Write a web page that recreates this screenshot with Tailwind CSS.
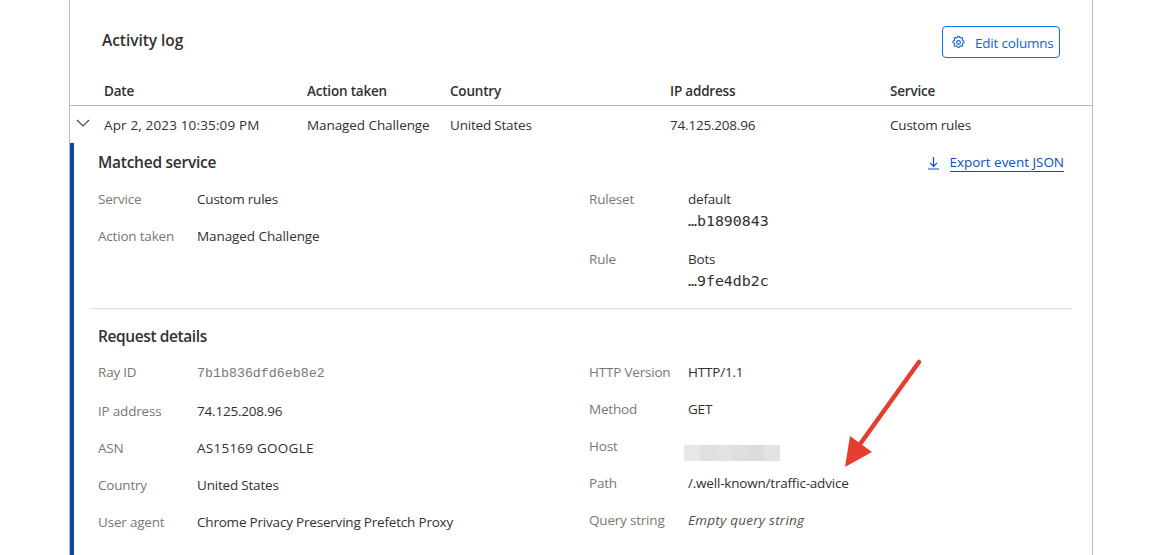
<!DOCTYPE html>
<html lang="en">
<head>
    <meta charset="UTF-8">
    <meta name="viewport" content="width=device-width, initial-scale=1.0">
    <script src="https://cdn.jsdelivr.net/npm/@tailwindcss/browser@4"></script>
    <title>Activity log</title>
</head>
<body class="bg-white h-[555px] overflow-hidden font-['Open_Sans','Noto_Sans',sans-serif] text-[13.5px] tracking-[-0.2px] text-[#313131]">
    <div class="relative ml-[69px] w-[1024px] h-[555px] border-x border-[#b9b9b9] overflow-hidden">
        <!-- card header -->
        <div class="flex justify-between items-start h-[71px] pl-[32px] pr-[32px] pt-[26px]">
            <h2 class="text-[15.5px] leading-[28px] font-semibold tracking-[-0.05px]">Activity log</h2>
            <button class="flex items-center gap-[9px] w-[118px] h-[32px] pl-[8px] border border-[#0e6fe6] rounded-[4px] text-[#0e63d8]">
                <svg class="w-[15px] h-[15px]" viewBox="0 0 24 24" fill="none" stroke="currentColor" stroke-width="1.8">
                    <path stroke-linecap="round" stroke-linejoin="round" d="M10.3 3.3c.4-1.7 3-1.7 3.4 0a1.7 1.7 0 0 0 2.6 1.1c1.5-.9 3.2.8 2.3 2.3a1.7 1.7 0 0 0 1.1 2.6c1.7.4 1.7 3 0 3.4a1.7 1.7 0 0 0-1.1 2.6c.9 1.5-.8 3.2-2.3 2.3a1.7 1.7 0 0 0-2.6 1.1c-.4 1.7-3 1.7-3.4 0a1.7 1.7 0 0 0-2.6-1.1c-1.5.9-3.2-.8-2.3-2.3a1.7 1.7 0 0 0-1.1-2.6c-1.7-.4-1.7-3 0-3.4a1.7 1.7 0 0 0 1.1-2.6c-.9-1.5.8-3.2 2.3-2.3a1.7 1.7 0 0 0 2.6-1.1z"></path>
                    <circle cx="12" cy="12" r="3"></circle>
                </svg>
                <span class="mt-[2px]">Edit columns</span>
            </button>
        </div>

        <!-- table head -->
        <div class="grid grid-cols-[203px_143px_220px_220px_1fr] pl-[34px] h-[35px] items-center font-semibold border-b border-[#b9b9b9] pt-[7px]">
            <div>Date</div>
            <div>Action taken</div>
            <div>Country</div>
            <div>IP address</div>
            <div>Service</div>
        </div>

        <!-- row -->
        <div class="relative grid grid-cols-[203px_143px_220px_220px_1fr] pl-[34px] h-[37px] pt-[1px] items-center">
            <svg class="absolute left-[6px] top-[12px] w-[14px] h-[10px]" viewBox="0 0 14 10" fill="none" stroke="#444" stroke-width="1.1">
                <path d="M1 2l6 6 6-6"></path>
            </svg>
            <div class="tracking-[0.15px]">Apr 2, 2023 10:35:09 PM</div>
            <div class="tracking-[-0.08px]">Managed Challenge</div>
            <div>United States</div>
            <div>74.125.208.96</div>
            <div>Custom rules</div>
        </div>

        <!-- expanded panel -->
        <div class="border-l-[4px] border-[#0a47a6] pl-[16px] pr-[20px] pb-[20px]">
            <div class="flex justify-between items-center h-[39px] pl-[8px] pr-[8px]">
                <h3 class="text-[15.5px] font-semibold tracking-[-0.25px]">Matched service</h3>
                <a href="#" class="flex items-center gap-[9px] text-[#0a4fc0]">
                    <svg class="w-[13px] h-[14px] -translate-x-[1px]" viewBox="0 0 13 14" fill="none" stroke="currentColor" stroke-width="1.2">
                        <path d="M6.5 1v9M3 6.8l3.5 3.5L10 6.8M1 13h11"></path>
                    </svg>
                    <span class="border-b border-[#0a4fc0] leading-[17px] tracking-[-0.03px]">Export event JSON</span>
                </a>
            </div>

            <div class="grid grid-cols-[491px_1fr] pl-[8px] h-[127px] border-b border-[#dcdcdc]">
                <div>
                    <div class="flex h-[37px] pt-[7px]"><span class="w-[99px] text-[#7c7672]">Service</span><span>Custom rules</span></div>
                    <div class="flex h-[37px] pt-[7px]"><span class="w-[99px] text-[#7c7672]">Action taken</span><span class="tracking-[-0.08px]">Managed Challenge</span></div>
                </div>
                <div>
                    <div class="flex h-[60px] pt-[7px]">
                        <span class="w-[99px] text-[#7c7672]">Ruleset</span>
                        <div>
                            <div>default</div>
                            <div class="font-['DejaVu_Sans_Mono',monospace] text-[14.9px] tracking-normal leading-[22px] mt-[1px]">…b1890843</div>
                        </div>
                    </div>
                    <div class="flex pt-[7px]">
                        <span class="w-[99px] text-[#7c7672]">Rule</span>
                        <div>
                            <div>Bots</div>
                            <div class="font-['DejaVu_Sans_Mono',monospace] text-[14.9px] tracking-normal leading-[22px] mt-[1px]">…9fe4db2c</div>
                        </div>
                    </div>
                </div>
            </div>

            <div class="pl-[8px] pt-[15px]">
                <h3 class="text-[15.5px] font-semibold leading-[24px] tracking-[-0.4px]">Request details</h3>
            </div>

            <div class="grid grid-cols-[491px_1fr] pl-[8px] pt-[14px]">
                <div>
                    <div class="flex h-[39px] items-start"><span class="w-[99px] text-[#7c7672]">Ray ID</span><span class="font-['Liberation_Mono',monospace] text-[13.3px] tracking-normal text-[#7c7672] mt-[2px]">7b1b836dfd6eb8e2</span></div>
                    <div class="flex h-[37px]"><span class="w-[99px] text-[#7c7672]">IP address</span><span>74.125.208.96</span></div>
                    <div class="flex h-[37px]"><span class="w-[99px] text-[#7c7672]">ASN</span><span class="tracking-[0.25px]">AS15169 GOOGLE</span></div>
                    <div class="flex h-[37px]"><span class="w-[99px] text-[#7c7672]">Country</span><span>United States</span></div>
                    <div class="flex h-[37px]"><span class="w-[99px] text-[#7c7672]">User agent</span><span>Chrome Privacy Preserving Prefetch Proxy</span></div>
                </div>
                <div>
                    <div class="flex h-[37px]"><span class="w-[99px] text-[#7c7672]">HTTP Version</span><span>HTTP/1.1</span></div>
                    <div class="flex h-[37px]"><span class="w-[99px] text-[#7c7672]">Method</span><span>GET</span></div>
                    <div class="flex h-[37px]">
                        <span class="w-[95px] text-[#7c7672]">Host</span>
                        <div class="flex h-[16px] w-[96px] mt-[9px]">
                            <div class="flex-1 bg-[#e8e8e8]"></div>
                            <div class="flex-1 bg-[#e1e0de]"></div>
                            <div class="flex-1 bg-[#e3e3e3]"></div>
                            <div class="flex-1 bg-[#dfdfe0]"></div>
                            <div class="flex-1 bg-[#dcdcdc]"></div>
                            <div class="flex-1 bg-[#e2e2e3]"></div>
                        </div>
                    </div>
                    <div class="flex h-[37px]"><span class="w-[99px] text-[#7c7672]">Path</span><span>/.well-known/traffic-advice</span></div>
                    <div class="flex h-[37px]"><span class="w-[99px] text-[#7c7672]">Query string</span><span class="italic text-[#55504d] tracking-[0.25px]">Empty query string</span></div>
                </div>
            </div>
        </div>

        <!-- annotation arrow -->
        <svg class="absolute left-[770px] top-[355px] w-[90px] h-[115px]" viewBox="0 0 90 115" fill="none">
            <path d="M79 7L18 92" stroke="#e53e30" stroke-width="4.5" stroke-linecap="round"></path>
            <path d="M5 112L10 81 32 97z" fill="#e53e30"></path>
        </svg>
    </div>
</body>
</html>
